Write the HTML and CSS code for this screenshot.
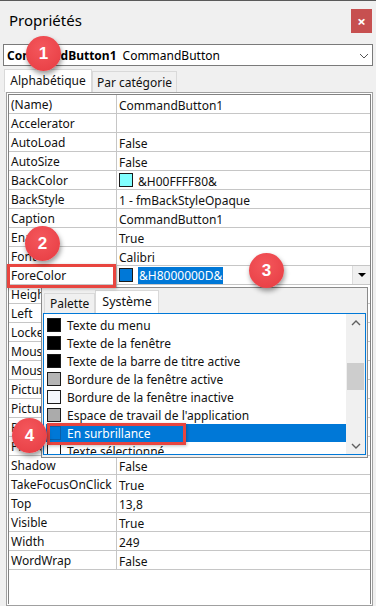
FILE: index.html
```html
<!DOCTYPE html>
<html lang="fr">
  <head>
    <meta charset="UTF-8" />
    <title>Propriétés</title>
    <link rel="stylesheet" href="styles.css">
  </head>
  <body>
    <div class="window">
      <div class="titlebar">
        <span class="title">Propriétés</span>
        <span class="close">&times;</span>
      </div>

      <div class="combo">
        <b>CommandButton1</b><span class="type">CommandButton</span>
        <svg class="chev" width="10" height="6" viewBox="0 0 10 6"><path d="M1 1 L5 5 L9 1" fill="none" stroke="#555" stroke-width="1"/></svg>
      </div>

      <div class="tabs">
        <div class="tab active">Alphabétique</div>
        <div class="tab">Par catégorie</div>
      </div>

      <div class="grid">
        <div class="grid-inner">
          <div class="row"><div class="name">(Name)</div><div class="value">CommandButton1</div></div>
          <div class="row"><div class="name">Accelerator</div><div class="value"></div></div>
          <div class="row"><div class="name">AutoLoad</div><div class="value">False</div></div>
          <div class="row"><div class="name">AutoSize</div><div class="value">False</div></div>
          <div class="row"><div class="name">BackColor</div><div class="value"><span class="swatch cyan"></span>&amp;H00FFFF80&amp;</div></div>
          <div class="row"><div class="name">BackStyle</div><div class="value">1 - fmBackStyleOpaque</div></div>
          <div class="row"><div class="name">Caption</div><div class="value">CommandButton1</div></div>
          <div class="row"><div class="name">Enabled</div><div class="value">True</div></div>
          <div class="row"><div class="name">Font</div><div class="value">Calibri</div></div>
          <div class="row"><div class="name">ForeColor</div><div class="value"><span class="swatch blue"></span><span class="sel">&amp;H8000000D&amp;</span>
            <span class="drop-btn"><svg width="8" height="4" viewBox="0 0 8 4"><path d="M0 0 H8 L4 4 Z" fill="#000"/></svg></span></div></div>
          <div class="row"><div class="name">Height</div><div class="value">24</div></div>
          <div class="row"><div class="name">Left</div><div class="value">12</div></div>
          <div class="row"><div class="name">Locked</div><div class="value">False</div></div>
          <div class="row"><div class="name">MouseIcon</div><div class="value">(None)</div></div>
          <div class="row"><div class="name">MousePointer</div><div class="value">0 - fmMousePointerDefault</div></div>
          <div class="row"><div class="name">Picture</div><div class="value">(None)</div></div>
          <div class="row"><div class="name">PicturePosition</div><div class="value">7 - fmPicturePositionAboveCenter</div></div>
          <div class="row"><div class="name">Placement</div><div class="value">2</div></div>
          <div class="row"><div class="name">PrintObject</div><div class="value">True</div></div>
          <div class="row"><div class="name">Shadow</div><div class="value">False</div></div>
          <div class="row"><div class="name">TakeFocusOnClick</div><div class="value">True</div></div>
          <div class="row"><div class="name">Top</div><div class="value">13,8</div></div>
          <div class="row"><div class="name">Visible</div><div class="value">True</div></div>
          <div class="row"><div class="name">Width</div><div class="value">249</div></div>
          <div class="row"><div class="name">WordWrap</div><div class="value">False</div></div>
        </div>
      </div>

      <!-- colour picker dropped down from ForeColor -->
      <div class="popup">
        <div class="ptabs">
          <div class="ptab">Palette</div>
          <div class="ptab active">Système</div>
        </div>
        <div class="plist">
          <div class="items">
            <div class="item"><span class="swatch" style="background:#000"></span>Texte du menu</div>
            <div class="item"><span class="swatch" style="background:#000"></span>Texte de la fenêtre</div>
            <div class="item"><span class="swatch" style="background:#000"></span>Texte de la barre de titre active</div>
            <div class="item"><span class="swatch" style="background:#b4b4b4"></span>Bordure de la fenêtre active</div>
            <div class="item"><span class="swatch" style="background:#f4f7fc"></span>Bordure de la fenêtre inactive</div>
            <div class="item"><span class="swatch" style="background:#ababab"></span>Espace de travail de l'application</div>
            <div class="item selected"><span class="swatch" style="background:#0078d7"></span>En surbrillance</div>
            <div class="item"><span class="swatch" style="background:#fff"></span>Texte sélectionné</div>
          </div>
          <div class="scroll">
            <div class="arrow"><svg width="10" height="6" viewBox="0 0 10 6"><path d="M1 5 L5 1 L9 5" fill="none" stroke="#606060" stroke-width="1.4"/></svg></div>
            <div class="track-top"></div>
            <div class="thumb"></div>
            <div class="track"></div>
            <div class="arrow"><svg width="10" height="6" viewBox="0 0 10 6"><path d="M1 1 L5 5 L9 1" fill="none" stroke="#606060" stroke-width="1.4"/></svg></div>
          </div>
        </div>
      </div>

      <div class="mark mark-forecolor"></div>
      <div class="mark mark-highlight"></div>

      <div class="badge b1">1</div>
      <div class="badge b2">2</div>
      <div class="badge b3">3</div>
      <div class="badge b4">4</div>
    </div>
  </body>
</html>
```

FILE: styles.css
```css
/* General */
* {
  box-sizing: border-box;
}

body {
  margin: 0;
  width: 376px;
  height: 606px;
  overflow: hidden;
  background-color: #f0f0f0;
  font-family: "Noto Sans", "DejaVu Sans", sans-serif;
  font-size: 12px;
  color: #111;
}

.window {
  position: relative;
  height: 606px;
  border-top: 1px solid #5a5a5a;
}

/* Title bar */
.titlebar {
  height: 43px;
  display: flex;
  justify-content: space-between;
  align-items: flex-start;
  padding: 8px 4px 0 9px;
}

.title {
  font-size: 15px;
  line-height: 22px;
  color: #000;
}

.close {
  width: 21px;
  height: 24px;
  background-color: #c75050;
  color: #fff;
  display: flex;
  justify-content: center;
  align-items: center;
  font-size: 15px;
  font-weight: bold;
}

/* Object combo */
.combo {
  margin-left: 3px;
  width: 370px;
  height: 22px;
  border: 1px solid #7a7a7a;
  background-color: #fff;
  display: flex;
  align-items: center;
  padding-left: 3px;
  padding-top: 1px;
  color: #000;
}

.combo b {
  font-weight: 700;
}

.combo .type {
  margin-left: 6px;
}

.combo .chev {
  margin-left: auto;
  margin-right: 3px;
}

/* Tabs */
.tabs {
  display: flex;
  align-items: flex-end;
  height: 26px;
  padding-left: 4px;
}

.tab {
  height: 21px;
  border: 1px solid #d9d9d9;
  border-bottom: none;
  line-height: 21px;
  text-align: center;
  white-space: nowrap;
}

.tabs .tab {
  width: 85px;
}

.tabs .tab.active {
  width: 88px;
  height: 23px;
  background-color: #fff;
  line-height: 22px;
}

/* Property grid */
.grid {
  margin-left: 6px;
  width: 367px;
  height: 514px;
  border: 1px solid #a0a0a0;
  padding: 1px;
  background-color: #fff;
}

.grid-inner {
  height: 100%;
  border: 1px solid #828282;
  border-bottom: none;
}

.row {
  display: flex;
  height: 19px;
  border-bottom: 1px solid #c6c6c6;
}

.name {
  width: 108px;
  border-right: 1px solid #c6c6c6;
  padding: 2px 0 0 2px;
  line-height: 16px;
  white-space: nowrap;
  overflow: hidden;
}

.value {
  flex: 1;
  display: flex;
  align-items: center;
  padding: 2px 0 0 2px;
  white-space: nowrap;
  overflow: hidden;
}

.swatch {
  width: 14px;
  height: 14px;
  flex: none;
  border: 1px solid #1a1a1a;
  margin-right: 5px;
}

.value .swatch {
  margin-top: -2px;
}

.swatch.cyan {
  background-color: #80ffff;
}

.swatch.blue {
  background-color: #0078d7;
}

.sel {
  background-color: #0078d7;
  color: #fff;
  line-height: 16px;
  margin-top: -1px;
  padding: 1px 1px 0;
}

.drop-btn {
  margin: -2px 0 0 auto;
  width: 18px;
  height: 18px;
  background-color: #f0f0f0;
  border-left: 1px solid #dcdcdc;
  display: flex;
  justify-content: center;
  align-items: center;
}

/* Colour popup */
.popup {
  position: absolute;
  left: 41px;
  top: 286px;
  width: 327px;
  height: 171px;
  background-color: #f0f0f0;
  border: 1px solid #8a8a8a;
}

.ptabs {
  display: flex;
  align-items: flex-end;
  height: 25px;
  padding-left: 2px;
}

.ptab {
  height: 20px;
  padding: 0 5px;
  border: 1px solid #d9d9d9;
  border-bottom: none;
  line-height: 20px;
}

.ptab.active {
  height: 23px;
  background-color: #fff;
  line-height: 22px;
  padding: 0 6px;
  font-size: 12.5px;
}

.plist {
  margin: 0 1px;
  height: 142px;
  border: 1px solid #0078d7;
  background-color: #fff;
  display: flex;
}

.items {
  flex: 1;
  padding: 2px 0 0 2px;
  overflow: hidden;
}

.item {
  display: flex;
  align-items: center;
  height: 18px;
  padding-left: 1px;
  white-space: nowrap;
}

.item .swatch {
  margin-right: 6px;
}

.item.selected {
  background-color: #0078d7;
  color: #fff;
}

.item.selected .swatch {
  border-color: #0a5ea8;
}

.scroll {
  width: 19px;
  background-color: #f0f0f0;
  display: flex;
  flex-direction: column;
}

.arrow {
  height: 17px;
  display: flex;
  justify-content: center;
  align-items: center;
}

.track-top {
  height: 32px;
}

.thumb {
  height: 27px;
  margin: 0 1px;
  background-color: #cdcdcd;
}

.track {
  flex: 1;
}

/* Annotations */
.mark {
  position: absolute;
  border: 3px solid #e8453f;
  box-shadow: 1px 1px 3px rgba(0, 0, 0, 0.25);
}

.mark-forecolor {
  left: 7px;
  top: 263px;
  width: 109px;
  height: 24px;
}

.mark-highlight {
  left: 47px;
  top: 422px;
  width: 139px;
  height: 22px;
}

.badge {
  position: absolute;
  width: 35px;
  height: 35px;
  border-radius: 50%;
  background: radial-gradient(circle at 45% 35%, #f4575c, #e63b41);
  color: #fff;
  font-family: "Liberation Sans", Arial, sans-serif;
  font-weight: bold;
  font-size: 17px;
  display: flex;
  justify-content: center;
  align-items: center;
  box-shadow: 1px 3px 5px rgba(0, 0, 0, 0.4);
}

.b1 {
  left: 26px;
  top: 35px;
}

.b2 {
  left: 25px;
  top: 225px;
}

.b3 {
  left: 249px;
  top: 252px;
}

.b4 {
  left: 12px;
  top: 417px;
}
```
